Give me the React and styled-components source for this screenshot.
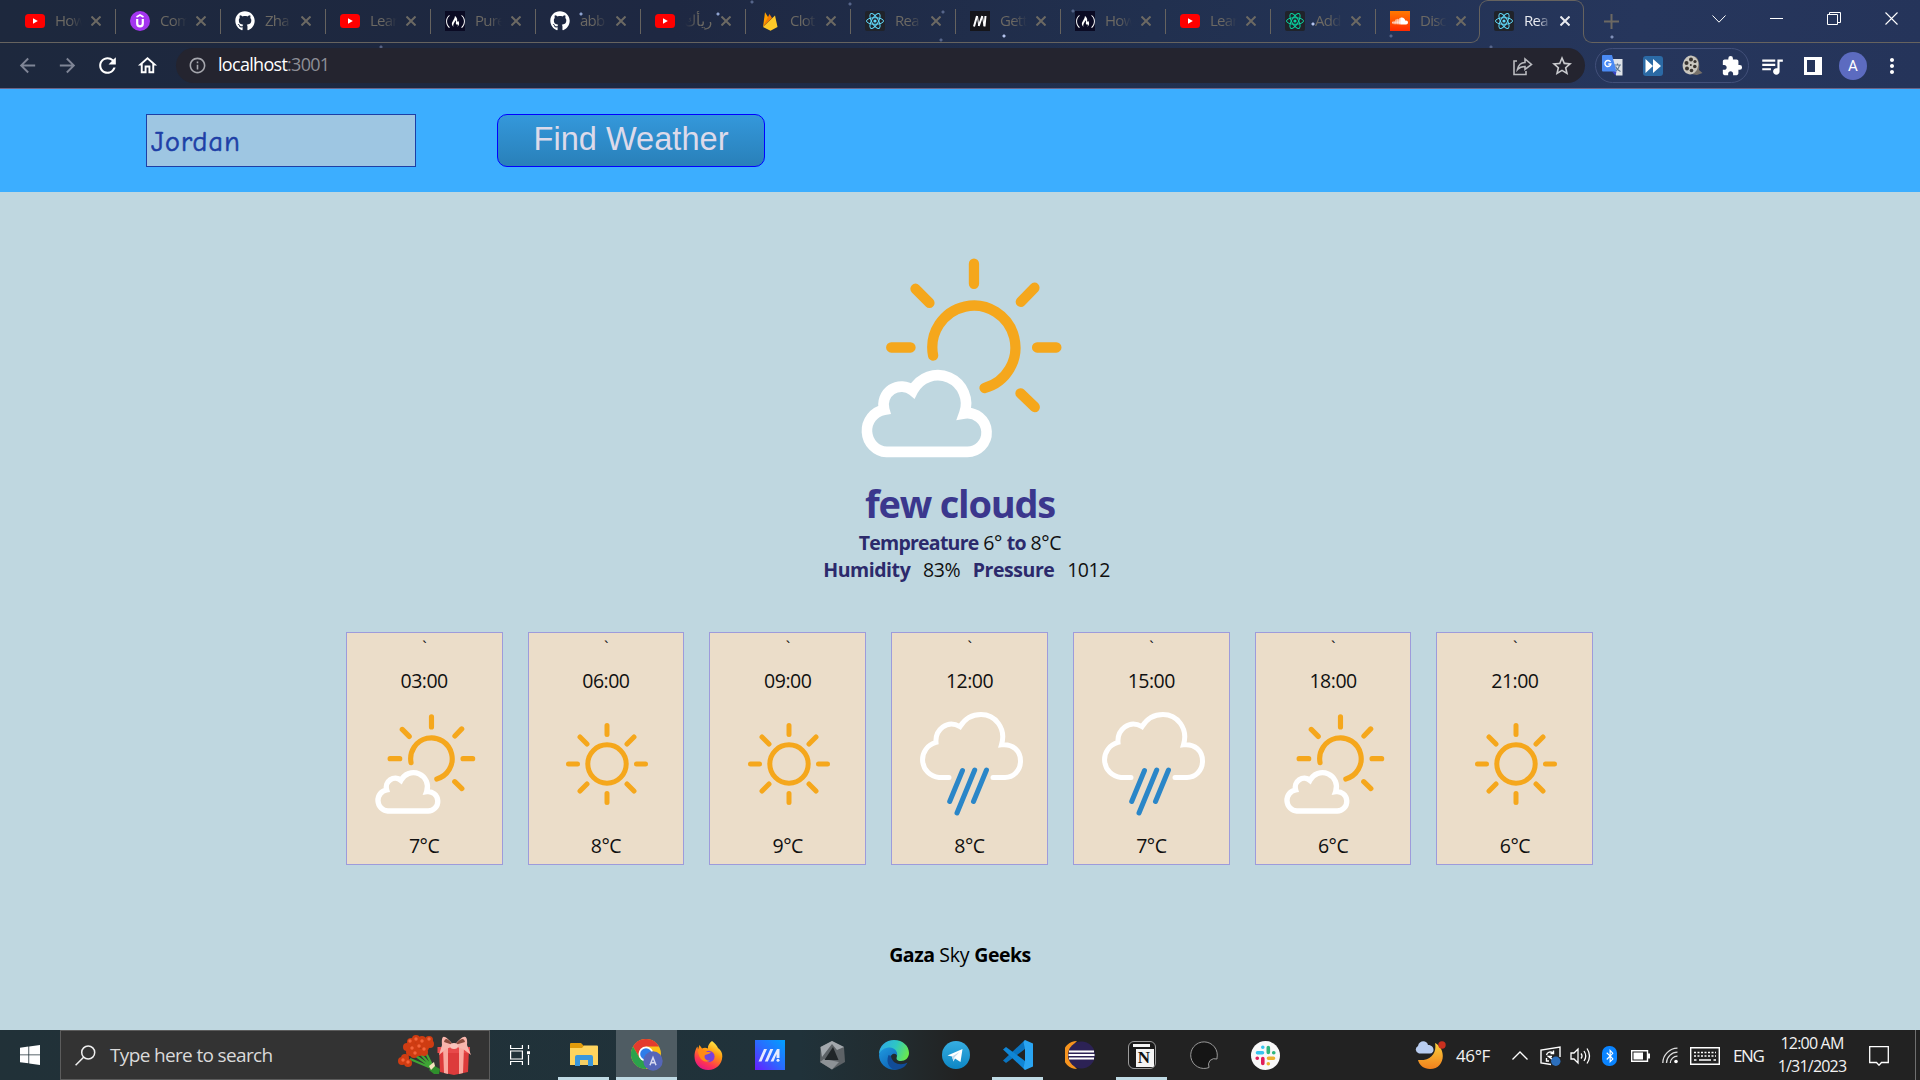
import React from "react";
import styled, { createGlobalStyle, css } from "styled-components";
import { FaYoutube, FaGithub, FaSoundcloud, FaFreeCodeCamp, FaBluetoothB } from "react-icons/fa";
import {
  MdArrowBack,
  MdArrowForward,
  MdRefresh,
  MdOutlineHome,
  MdInfoOutline,
  MdStarBorder,
  MdExtension,
  MdQueueMusic,
  MdMoreVert,
} from "react-icons/md";

const Global = createGlobalStyle`
  * { box-sizing: border-box; }
  body { margin: 0; font-family: "Open Sans", "Noto Sans", sans-serif; overflow: hidden; }
  svg { display: block; flex: none; }
`;

const Screen = styled.div`
  width: 1920px;
  height: 1080px;
  display: flex;
  flex-direction: column;
  background: #bfd7e0;
`;

/* ---------- browser window ---------- */

const star = (x, y, c = "#8fa3d0") => `radial-gradient(circle at ${x}px ${y}px, ${c} 0 1px, transparent 2px)`;

const Browser = styled.div`
  height: 89px;
  flex: none;
  border-bottom: 1px solid #6a6488;
  background: ${[
    star(581, 14),
    star(381, 47, "#566182"),
    star(752, 2, "#56658a"),
    star(850, 4, "#56658a"),
    star(718, 14),
    star(943, 12, "#56658a"),
    star(941, 40, "#56658a"),
    star(1004, 36, "#b4c4ee"),
    star(1073, 11, "#56658a"),
    star(1313, 24, "#b4c4ee"),
    star(1391, 36, "#56658a"),
    star(1491, 47, "#56658a"),
    star(1612, 37, "#8090b8"),
    "linear-gradient(97deg, #1d283d 0%, #1e2842 35%, #21304f 60%, #26365c 85%, #25345a 100%)",
  ].join(",")};
`;

const TabStrip = styled.div`
  display: flex;
  height: 43px;
`;

const line = "#66635f";

const TabGroup = styled.div`
  display: flex;
  width: 1470px;
  padding-left: 12px;
  border-bottom: 1px solid ${line};
`;

const TabBox = styled.div`
  display: flex;
  align-items: center;
  width: ${(p) => (p.$last ? 93 : 105)}px;
  height: 42px;
  padding-left: 13px;
  color: ${(p) => (p.$active ? "#e8eaf0" : "#6c6963")};
  position: relative;
`;

const ActiveBox = styled(TabBox)`
  width: 103px;
  padding-left: 14px;
  &::before {
    content: "";
    position: absolute;
    left: -1px;
    right: -1px;
    top: 0;
    height: 10px;
    border: 1px solid ${line};
    border-bottom: 0;
    border-radius: 9px 9px 0 0;
  }
`;

const Foot = styled.div`
  width: 10px;
  margin-top: 9px;
  border-bottom: 1px solid ${line};
  ${(p) =>
    p.$left
      ? css`border-right: 1px solid ${line}; border-bottom-right-radius: 9px;`
      : css`border-left: 1px solid ${line}; border-bottom-left-radius: 9px;`}
`;

const TabTitle = styled.span`
  width: 27px;
  height: 24px;
  line-height: 23px;
  margin: 0 9px 0 10px;
  font-size: 15px;
  letter-spacing: -0.75px;
  white-space: nowrap;
  direction: ${(p) => (p.$rtl ? "rtl" : "ltr")};
  mask-image: linear-gradient(to ${(p) => (p.$rtl ? "left" : "right")}, #000 50%, transparent 100%);
`;

const TabRule = styled.i`
  width: 1px;
  height: 25px;
  margin: 0 1px 0 auto;
  background: #66635f;
`;

const StripEnd = styled.div`
  flex: 1;
  display: flex;
  align-items: center;
  border-bottom: 1px solid ${line};
`;

const Slot = styled.span`
  display: flex;
  align-items: center;
  justify-content: center;
  flex: none;
  width: ${(p) => p.$w}px;
  margin-left: ${(p) => p.$ml || 0}px;
  margin-top: ${(p) => p.$mt || 0}px;
`;

const Toolbar = styled.div`
  display: flex;
  align-items: center;
  height: 45px;
  padding-left: 7px;
  color: #fff;
`;

const Omnibox = styled.div`
  display: flex;
  align-items: center;
  width: 1409px;
  height: 35px;
  border-radius: 18px;
  background: #24242f;
  color: #c8c9cd;
  padding: 0 11px 0 12px;
`;

const Url = styled.span`
  flex: 1;
  margin-left: 11px;
  font-size: 18px;
  line-height: 32px;
  height: 35px;
  letter-spacing: -0.75px;
  color: #8d8e96;
  b { font-weight: 400; color: #fff; letter-spacing: -0.7px; }
`;

const ExtPill = styled.div`
  display: flex;
  align-items: center;
  width: 154px;
  height: 35px;
  margin-left: 10px;
  border: 1px solid #42507a;
  border-radius: 18px;
`;

const Avatar = styled.span`
  width: 28px;
  height: 28px;
  border-radius: 50%;
  background: #5c6bc0;
  font: 15px/28px Roboto, sans-serif;
  text-align: center;
  color: #fff;
`;

/* ---------- weather page ---------- */

const SearchBar = styled.form`
  display: flex;
  align-items: center;
  height: 103px;
  flex: none;
  padding: 0 0 0 146px;
  background: #3caeff;
`;

const CityInput = styled.input`
  width: 270px;
  height: 53px;
  margin: 0 81px 0 0;
  padding: 3px 3px 0 4px;
  border: 1px solid #1d3fa6;
  border-radius: 0;
  background: #9ec6e2;
  color: #1d3fa6;
  font: 28px "Comic Sans MS", "Comic Neue", Lato, sans-serif;
  letter-spacing: 1.2px;
  -webkit-text-stroke: 0.6px #1d3fa6;
  outline: 0;
`;

const FindButton = styled.button`
  width: 268px;
  height: 53px;
  padding: 0 0 3px;
  border: 1px solid #0000ff;
  border-radius: 10px;
  background: linear-gradient(#3498db, #2980b9);
  color: #dcdaea;
  font: 32.6px "Liberation Sans", Arial, sans-serif;
`;

const Page = styled.main`
  flex: 1;
  display: flex;
  flex-direction: column;
  align-items: center;
  padding-top: 66px;
  color: #101010;
  font-size: 19.5px;
  line-height: 27px;
`;

const Hero = styled.div`
  padding-left: 4px;
`;

const Summary = styled.h1`
  margin: 20px 0 0;
  font-size: 38px;
  line-height: 51px;
  font-weight: 700;
  letter-spacing: -1.2px;
  color: #3b378d;
`;

const Stat = styled.p`
  margin: 0;
  white-space: pre;
  letter-spacing: ${(p) => p.$ls}px;
  word-spacing: ${(p) => p.$ws || 0}px;
  padding-left: ${(p) => p.$shift || 0}px;
  strong { color: #2c2a6c; letter-spacing: ${(p) => p.$bs}px; }
`;

const CardRow = styled.section`
  display: flex;
  gap: 25px;
  margin: 49px 0 0 19px;
`;

const Card = styled.article`
  display: flex;
  flex-direction: column;
  align-items: center;
  width: 156.8px;
  height: 233px;
  border: 1px solid #9d9bdb;
  background: #ebddc9;
  line-height: 27px;
  letter-spacing: -0.5px;
`;

const Tick = styled.span`
  height: 34px;
  padding-top: 1px;
  font-size: 16px;
`;

const CardIcon = styled.div`
  display: flex;
  align-items: center;
  justify-content: center;
  height: 104px;
  margin: 18px 0 16px 3px;
`;

const Credit = styled.footer`
  margin-top: 76px;
  color: #000;
  letter-spacing: -0.2px;
  b { letter-spacing: -0.5px; }
`;

/* ---------- taskbar ---------- */

const Taskbar = styled.div`
  display: flex;
  height: 50px;
  flex: none;
  background: linear-gradient(90deg, #213138 0, #20323a 800px, #222b2e 900px, #222222 960px);
  color: #f2f2f2;
  font-size: 18px;
`;

const StartCell = styled.div`
  display: grid;
  place-items: center;
  width: 60px;
`;

const SearchField = styled.div`
  display: flex;
  align-items: center;
  width: 430px;
  padding: 0 16px 0 14px;
  border: 1px solid #5c5c5c;
  background: #333333;
  color: #dadada;
  font-size: 19px;
  span { flex: 1; margin-left: 14px; letter-spacing: -0.65px; }
`;

const AppCell = styled.div`
  display: grid;
  place-items: center;
  width: ${(p) => (p.$active ? 61 : 51)}px;
  margin-right: ${(p) => (p.$gap ?? 11)}px;
  background: ${(p) => (p.$active ? "#4f5c63" : "transparent")};
  border-bottom: ${(p) => (p.$open ? "3px solid #bfdae4" : "0")};
  padding-top: ${(p) => (p.$open ? 3 : 0)}px;
`;

const Tray = styled.div`
  display: flex;
  align-items: center;
  margin-left: auto;
  width: 505px;
  padding-top: 1px;
`;

const TrayText = styled.span`
  width: ${(p) => p.$w}px;
  margin-left: ${(p) => p.$ml}px;
  font-size: 17px;
  letter-spacing: ${(p) => p.$ls}px;
  white-space: nowrap;
`;

const Clock = styled.div`
  width: 84px;
  margin: -3px 0 0 7px;
  font-size: 16px;
  line-height: 24px;
  letter-spacing: -0.8px;
  text-align: center;
  white-space: nowrap;
  div:first-child { padding-top: 2px; line-height: 22px; }
`;

const DesktopEdge = styled.i`
  width: 1px;
  height: 50px;
  margin: -1px 0 0 26px;
  background: #6f6f6f;
`;

/* ---------- weather drawings ---------- */

const FewClouds = ({ size }) => (
  <svg width={size} height={size * 0.99} viewBox="241 55 608 597" preserveAspectRatio="none" fill="none">
    <g stroke="#f5a71c" strokeWidth="31" strokeLinecap="round">
      <path d="M458 346A125 125 0 1 1 613 443" />
      <path d="M581 72V132M771 322H829M332 322H390M763 144L722 186M405 147L447 189M721 459L764 500" />
    </g>
    <path
      d="M318 634A63.600 63.600 0 0 1 311 508A54 54 0 0 1 397 451A84.800 84.800 0 0 1 552 519A57.900 57.900 0 1 1 558 634Z"
      stroke="#fff"
      strokeWidth="32"
    />
  </svg>
);

const Sunny = () => (
  <svg width="82" height="82" viewBox="-41 -41 82 82" fill="none" stroke="#f5a71c" strokeWidth="5" strokeLinecap="round">
    <circle r="19.2" />
    <path d="M0-38.5V-29.5M0 29.5V38.5M-38.5 0H-29.5M29.5 0H38.5M-27-27L-20-20M27-27L20-20M-27 27L-20 20M27 27L20 20" />
  </svg>
);

const Rain = () => (
  <svg width="104" height="104" viewBox="0 0 104 104" fill="none" strokeWidth="5">
    <path
      d="M30 65.400H20A17.800 17.800 0 0 1 17 30.400C16 18 28 7 41 14.600C46 6.500 53 2.500 62 2.500C76 2.500 87.500 16 82.500 32.800C94 31.500 101.500 39 101.500 49C101.500 59 94 65.400 86 65.400H74"
      stroke="#fff"
      strokeLinecap="round"
    />
    <path d="M43.500 58.500L30.700 89.500M55.700 58L38 101M67.500 58L54.500 89.500" stroke="#2a86c8" strokeLinecap="round" />
  </svg>
);

const drawings = { few: <FewClouds size={101} />, sun: <Sunny />, rain: <Rain /> };

/* ---------- favicons ---------- */

const Badge = styled.span`
  display: grid;
  place-items: center;
  flex: none;
  width: 20px;
  height: 20px;
  border-radius: ${(p) => p.$r || 0};
  background: ${(p) => p.$bg || "transparent"};
  color: ${(p) => p.$fg || "#fff"};
`;

const Play = () => (
  <Badge>
    <svg width="20" height="14" viewBox="0 0 20 14">
      <rect width="20" height="14" rx="3.500" fill="#f00" />
      <path d="M8 4.200L12.800 7 8 9.800Z" fill="#fff" />
    </svg>
  </Badge>
);
const Udemy = () => (
  <Badge $r="50%" $bg="#a435f0">
    <svg width="20" height="20" viewBox="0 0 20 20" fill="none" stroke="#fff" strokeWidth="2.200">
      <path d="M6.500 6L10 4l3.500 2" strokeWidth="1.600" />
      <path d="M7.200 8V12.500A2.800 2.800 0 0 0 12.800 12.500V8" />
    </svg>
  </Badge>
);
const Git = () => (
  <Badge>
    <FaGithub size={20} />
  </Badge>
);
const Camp = () => (
  <Badge $bg="#0a0a23">
    <FaFreeCodeCamp size={19} />
  </Badge>
);
const Firebase = () => (
  <Badge>
    <svg width="20" height="20" viewBox="0 0 20 20">
      <path d="M3 16L5 1.200 9 7.500Z" fill="#ffa000" />
      <path d="M3 16L9.500 3l2.500 4Z" fill="#f57c00" />
      <path d="M3 16L15 4.500 17.500 16 10.500 19.800Z" fill="#ffca28" />
    </svg>
  </Badge>
);
const Atom = ({ color }) => (
  <Badge $bg="#20232a" $r="2px">
    <svg width="20" height="20" viewBox="-10 -10 20 20" fill="none" stroke={color} strokeWidth="1">
      <ellipse rx="8.500" ry="3.300" />
      <ellipse rx="8.500" ry="3.300" transform="rotate(60)" />
      <ellipse rx="8.500" ry="3.300" transform="rotate(120)" />
      <circle r="1.600" fill={color} stroke="none" />
    </svg>
  </Badge>
);
const Slashes = () => (
  <Badge $bg="#15151a">
    <svg width="20" height="20" viewBox="0 0 20 20" fill="none" stroke="#fff">
      <path d="M4 15.500L7 5M8.700 15L12.300 5M14.500 15.500L15.500 5" strokeWidth="2" />
      <path d="M7.500 5L8.700 15M12.500 5L14 15" strokeWidth="1" />
    </svg>
  </Badge>
);
const Sound = () => (
  <Badge $bg="linear-gradient(#ff7a00,#ff2a00)">
    <FaSoundcloud size={16} />
  </Badge>
);

const tabs = [
  ["How", <Play />],
  ["Com", <Udemy />],
  ["Zha", <Git />],
  ["Lear", <Play />],
  ["Pure", <Camp />],
  ["abb", <Git />],
  ["ريأك", <Play />],
  ["Clot", <Firebase />],
  ["Rea", <Atom color="#61dafb" />],
  ["Gett", <Slashes />],
  ["How", <Camp />],
  ["Lear", <Play />],
  ["Add", <Atom color="#09d3a0" />],
  ["Disc", <Sound />],
];

const Cross = ({ s = 10, w = 2, c = "currentColor" }) => (
  <svg width={s} height={s} viewBox={`0 0 ${s} ${s}`} stroke={c} strokeWidth={w}>
    <path d={`M.5.5L${s - 0.5} ${s - 0.5}M${s - 0.5}.5L.5 ${s - 0.5}`} />
  </svg>
);

/* ---------- toolbar drawings ---------- */

const Share = () => (
  <svg width="21" height="20" viewBox="0 0 21 20" fill="none" stroke="#b9babf" strokeWidth="1.600">
    <path d="M5 5H2V18.500H14V15" />
    <path d="M5.500 13.500C6.500 8.500 9 6.500 13 6.500V3L19.500 8.500 13 13.500V10.500C9.500 10.500 7.500 11.300 5.500 13.500Z" />
  </svg>
);
const Translate = () => (
  <svg width="21" height="21" viewBox="0 0 21 21">
    <path d="M9 4H20.500V20.500H14Z" fill="#dfe3e8" />
    <path d="M12 10H19M15.500 8.500V10M17.500 10C17 13 15 15.500 12.500 16.500M13.500 11.500C14.500 14 16 15.500 18.500 16.500" fill="none" stroke="#5f7790" strokeWidth="1.200" />
    <path d="M10 16.500H14.500L13.500 20.500Z" fill="#3b45c8" />
    <path d="M1 0H10L14.500 16.500H1A1 1 0 0 1 0 15.500V1A1 1 0 0 1 1 0Z" fill="#4a8af4" />
    <path d="M8.500 7A3 3 0 1 0 8.900 9H6.300" fill="none" stroke="#fff" strokeWidth="1.400" />
  </svg>
);
const FastForward = () => (
  <svg width="20" height="20" viewBox="0 0 20 20">
    <rect width="20" height="20" rx="3" fill="#2b6aa5" />
    <path d="M2.500 3L10 10 2.500 17ZM10 3L18 10 10 17Z" fill="#fff" />
  </svg>
);
const Film = () => (
  <svg width="21" height="21" viewBox="0 0 21 21">
    <path d="M10 1C17 0 18 10 17 15L20.500 18 15 20 9 19Z" fill="#77716a" />
    <ellipse cx="8.500" cy="10" rx="7.800" ry="9.500" fill="#c9c6be" transform="rotate(10 8.500 10)" />
    <g fill="#38332f">
      <circle cx="9" cy="4.500" r="2" /><circle cx="4.500" cy="8" r="2" /><circle cx="5" cy="13.500" r="2" />
      <circle cx="9.500" cy="15.500" r="1.800" /><circle cx="12.800" cy="11.500" r="1.800" /><circle cx="13" cy="6.500" r="1.600" />
      <circle cx="8.800" cy="10" r="1" />
    </g>
  </svg>
);

/* ---------- taskbar drawings ---------- */

const Windows = () => (
  <svg width="20" height="20" viewBox="0 0 20 20" fill="#fff">
    <path d="M0 2.800L8.400 1.600V9.500H0ZM9.200 1.500L20 0V9.500H9.200ZM0 10.300H8.400V18.300L0 17.200ZM9.200 10.300H20V20L9.200 18.400Z" />
  </svg>
);
const Lens = () => (
  <svg width="21" height="21" viewBox="0 0 21 21" fill="none" stroke="#f0f0f0" strokeWidth="1.500">
    <circle cx="13.200" cy="7.500" r="6.500" />
    <path d="M8.600 12.200L.6 20.200" />
  </svg>
);
const Gifts = () => (
  <svg width="75" height="40" viewBox="0 0 75 40">
    <g stroke="#3fa535" strokeWidth="2.200">
      <path d="M14 18L40 37M20 16L38 36M26 14L36 34M12 24L38 35" />
    </g>
    <path d="M35 30L42 34 41 39 36 39 31 35Z" fill="#2f8f2c" />
    <path d="M31 31L36 27 37 31 33 35Z" fill="#f4e2bd" />
    <g fill="#cf3c12">
      {[[9,12],[13,7],[18,4],[24,5],[31,5],[12,17],[17,12],[22,9],[27,12],[16,19],[21,17],[26,17],[4,26],[10,28],[7,23],[28,8],[32,9]].map(([x, y]) => (
        <circle key={`${x}-${y}`} cx={x} cy={y} r="4" />
      ))}
    </g>
    <g fill="#f4643a">
      {[[12,6],[18,4],[24,6],[31,4],[14,13],[21,11],[26,14],[17,18],[5,25],[10,27]].map(([x, y]) => (
        <circle key={`${x}-${y}`} cx={x} cy={y} r="1.700" />
      ))}
    </g>
    <path d="M41 14H71L70 37 56 40 42 37Z" fill="#dd3b3b" />
    <path d="M39.500 12H72V18H39.500Z" fill="#e84a4a" />
    <path d="M45 12H50V39L46 38ZM61 12H66L65 38 61 39Z" fill="#f9a9a0" />
    <path d="M56 11C46-2 43 0 44 10L41 20 48 14ZM56 11C66-2 70 0 69 10L73 20 65 14Z" fill="#f8b5ac" />
    <path d="M55 10C50 3 47 2 46 7ZM57 10C62 3 66 2 67 7Z" fill="#8a4a3c" />
    <ellipse cx="56" cy="11" rx="4" ry="3" fill="#fbc4bc" />
  </svg>
);
const TaskView = () => (
  <svg width="20" height="20" viewBox="0 0 20 20" fill="none" stroke="#fff" strokeWidth="1.200">
    <path d="M.6 0V3.500H12.400V0M.6 6H12.400V14H.6ZM.6 20V16.500H12.400V20M18.500 0V4M18.500 10V20" />
    <path d="M17 6.200H20V9.200H17Z" fill="#fff" stroke="none" />
  </svg>
);
const Explorer = () => (
  <svg width="28" height="24" viewBox="0 0 28 24">
    <path d="M0 1A1 1 0 0 1 1 0H11L14 3V8H0Z" fill="#e19b0b" />
    <path d="M0 5H12L14 2.500H27A1 1 0 0 1 28 3.500V22H0Z" fill="#ffd45e" />
    <path d="M5 23V14A2 2 0 0 1 7 12H21A2 2 0 0 1 23 14V23H18V17H10V23Z" fill="#3b97dc" />
    <path d="M10 17H18V22H10Z" fill="#f6cf65" />
  </svg>
);
const Chrome = () => (
  <svg width="32" height="32" viewBox="-15 -15 32 32">
    <circle r="15" fill="#fbc116" />
    <path d="M-13-7.500A15 15 0 0 1 13-7.500H0L-6.500 3.700Z" fill="#e33b2e" />
    <path d="M-13-7.500A15 15 0 0 0 0 15L6.500 3.700-6.500 3.700Z" fill="#2ba24c" />
    <circle r="7.500" fill="#fff" />
    <circle r="5.800" fill="#2f7de9" />
    <circle cx="7" cy="7" r="9.700" fill="#5566b8" />
    <path d="M4 11.200L7 3.500 10 11.200M5 8.800H9" fill="none" stroke="#d7d9f0" strokeWidth="1.500" />
  </svg>
);
const Firefox = () => (
  <svg width="29" height="29" viewBox="0 0 29 29">
    <defs>
      <linearGradient id="ffx" x1=".8" y1="0" x2=".3" y2="1">
        <stop offset="0" stopColor="#fff44f" /><stop offset=".4" stopColor="#ff980e" />
        <stop offset=".75" stopColor="#ff3750" /><stop offset="1" stopColor="#e31587" />
      </linearGradient>
      <radialGradient id="ffp"><stop offset="0" stopColor="#5b4fe0" /><stop offset="1" stopColor="#8b38d8" /></radialGradient>
    </defs>
    <path d="M18 0C21 2 23 5 24 7C27 9 28.500 12 28.300 15.500C28 23.500 22 29 14.300 29C6 29 .5 23 .5 15.500C.5 11 2 7 3.500 5.500L4 8.500L5.500 4L8 7.500C10 6.500 12 6.500 14 7.500C13.500 4.500 15.500 2 18 0Z" fill="url(#ffx)" />
    <circle cx="14.800" cy="15.500" r="5.800" fill="url(#ffp)" />
    <path d="M4 9C8 7 11 9 13 11L17 11C16 13 13 13.500 11 14C9.500 17 12 20 16 19.500C12 23 4 19 4 9Z" fill="#ff8a16" />
  </svg>
);
const MyAsus = () => (
  <svg width="30" height="30" viewBox="0 0 30 30">
    <defs>
      <linearGradient id="asus" x1="0" y1="1" x2="1" y2="0">
        <stop offset="0" stopColor="#6a1cff" /><stop offset=".5" stopColor="#2a6bff" /><stop offset="1" stopColor="#00a2ff" />
      </linearGradient>
    </defs>
    <path d="M0 0H30V30H0Z" fill="url(#asus)" />
    <path d="M3.500 21.500L9 9H12L6.500 21.500ZM9.800 21.500L15.300 9H18.300L12.800 21.500ZM15.500 21.500L22 9H24.500V18H21.500V14L18.500 21.500Z" fill="#e6ebff" />
    <circle cx="23" cy="20.300" r="1.500" fill="#e6ebff" />
  </svg>
);
const Armoury = () => (
  <svg width="26" height="29" viewBox="0 0 26 29">
    <path d="M13 0L25 6 26 21 13 28.500 1 21 1.500 6Z" fill="#5d6266" />
    <path d="M13 0L25 6 18 9 13 3 3 16 1.500 6Z" fill="#a3a8ad" />
    <path d="M1 21L5 18 20 21 13 28.500Z" fill="#8d9296" />
    <path d="M14 6L19.500 19 5.500 19Z" fill="#202528" />
  </svg>
);
const Edge = () => (
  <svg width="30" height="30" viewBox="0 0 30 30">
    <defs>
      <linearGradient id="edg" x1="0" y1=".3" x2="1" y2=".6">
        <stop offset="0" stopColor="#2fa9e6" /><stop offset=".5" stopColor="#2ec6c4" /><stop offset="1" stopColor="#6be84a" />
      </linearGradient>
      <linearGradient id="edb" x1="0" y1="0" x2=".6" y2="1"><stop offset="0" stopColor="#1f9ae0" /><stop offset="1" stopColor="#0f66b8" /></linearGradient>
    </defs>
    <path d="M0 14C0 6 7 0 15 0C24 0 30 6 30 13C30 18 26 21 22 21C18 21 17 19 17.800 17C19 13 16 10 12 10C6 10 1 13 0 14Z" fill="url(#edg)" />
    <path d="M0 15C1 10 6 7.500 11 7.500C16 8 19 12 18 16C17 12 11 14 11 19C11 24 14 28 18 29.700C8 31 0 24 0 15Z" fill="url(#edb)" />
    <path d="M9.500 15C6 24 12 30 18 29.700C23 29 27 26 28.500 22.500C22 26 13 24 12 16Z" fill="#114c98" />
  </svg>
);
const Telegram = () => (
  <svg width="28" height="28" viewBox="0 0 28 28">
    <defs><linearGradient id="tlg" x2="0" y2="1"><stop stopColor="#37aee2" /><stop offset="1" stopColor="#0d86c4" /></linearGradient></defs>
    <circle cx="14" cy="14" r="14" fill="url(#tlg)" />
    <path d="M5.500 14.500L20.500 8 18.500 21 13 17.500 11.500 20.500 10 15.500Z" fill="#fff" />
    <path d="M10 15.500L17.500 11 12.300 16.500 11.500 20.500Z" fill="#c5dcee" />
  </svg>
);
const Code = () => (
  <svg width="30" height="30" viewBox="0 0 30 30">
    <path d="M22 0L0 20.500 3 23 22 9Z" fill="#0a74c0" />
    <path d="M0 9.500L3 7 22 21V30Z" fill="#0f86d6" />
    <path d="M22 0L30 3.500V26.500L22 30 20.500 28 22 21V9L20.500 2Z" fill="#2aa5f2" />
  </svg>
);
const Eclipse = () => (
  <svg width="30" height="28" viewBox="0 0 30 28">
    <path d="M12 0A14 14 0 0 0 12 28C5 22 5 6 12 0Z" fill="#f7941e" />
    <circle cx="16.500" cy="14" r="13.500" fill="#2c2255" />
    <path d="M4 10.500H29M3.500 14H29.500M4 17.500H29" stroke="#fff" strokeWidth="1.900" />
  </svg>
);
const NotionBox = styled.span`
  display: grid;
  place-items: center;
  width: 28px;
  height: 28px;
  padding: 6px 0 0 5px;
  background:
    linear-gradient(#f5f5f5, #f5f5f5) 7px 7px / 18px 18px no-repeat,
    linear-gradient(#f5f5f5, #f5f5f5) 4px 2px / 17px 3px no-repeat,
    #1b1b1b;
  border: 1px solid #9c9c9c;
  border-radius: 6px;
  color: #111;
  font: bold 17px/18px "Liberation Serif", serif;
`;
const DarkMoon = () => (
  <svg width="28" height="28" viewBox="0 0 28 28">
    <path d="M27 17A13.300 13.300 0 1 0 19 26.500A7 7 0 0 1 20 19.500A7 7 0 0 1 27 18Z" fill="#151515" stroke="#9a9a9a" strokeWidth="1" />
  </svg>
);
const Slack = () => (
  <svg width="29" height="29" viewBox="0 0 29 29" strokeWidth="3.600" strokeLinecap="round">
    <circle cx="14.500" cy="14.500" r="14.500" fill="#f8f8f8" />
    <path d="M6.500 11.800H11.500M11.800 6.200V6.300" stroke="#36c5f0" />
    <path d="M17.300 6.500V11.500M22.700 11.800H22.800" stroke="#2eb67d" />
    <path d="M17.500 17.300H22.500M17.300 22.700V22.800" stroke="#ecb22e" />
    <path d="M11.800 17.500V22.500M6.200 17.300H6.300" stroke="#e01e5a" />
  </svg>
);
const MoonCloud = () => (
  <svg width="31" height="29" viewBox="0 0 31 29">
    <defs><linearGradient id="moon" x2="0" y2="1"><stop stopColor="#fbd03c" /><stop offset="1" stopColor="#f2801c" /></linearGradient></defs>
    <path d="M20 2C32 8 30 28 15 28C9 28 4 24 3 19C16 20 22 12 20 2Z" fill="url(#moon)" />
    <path d="M4 12.500A4 4 0 0 1 3 5C4-1 12-1 13 4C20 4 20 12.500 15 12.500Z" fill="#b9cdf0" />
    <circle cx="27" cy="4" r="3.700" fill="#c9301f" />
  </svg>
);
const Sync = () => (
  <svg width="21" height="20" viewBox="0 0 21 20" fill="none" stroke="#fff" strokeWidth="1.400">
    <path d="M11 18.500L1 17V4L20 1V11" />
    <path d="M6.500 9A4 4 0 0 1 13 7M13.500 4.500V7.500H10.500M12 10.500H8.500L12.500 13.500M6.500 12V15H9" />
    <circle cx="15.800" cy="15.300" r="4.700" fill="#2c6fbd" stroke="none" />
  </svg>
);
const Volume = () => (
  <svg width="21" height="20" viewBox="0 0 21 20" fill="none" stroke="#fff" strokeWidth="1.300">
    <path d="M1 7H4L8 3V17L4 13H1ZM11 7.500Q13 10 11 12.500M14 5Q17.500 10 14 15M17 2.500Q22 10 17 17.500" />
  </svg>
);
const Battery = () => (
  <svg width="19" height="12" viewBox="0 0 19 12">
    <path d="M.7.7H16.500V11.300H.7Z" fill="none" stroke="#fff" strokeWidth="1.400" />
    <path d="M2.500 2.500H12V9.500H2.500ZM17 3.500H19V8.500H17Z" fill="#fff" />
  </svg>
);
const Wifi = () => (
  <svg width="17" height="17" viewBox="0 0 17 17" fill="none" stroke="#ddd" strokeWidth="1.300">
    <path d="M.8 16A15 15 0 0 1 15.500 1.200M4.500 16A11 11 0 0 1 15.500 5.200M8.300 16A7 7 0 0 1 15.500 9.200" />
    <circle cx="14" cy="14.500" r="1.800" fill="#fff" stroke="none" />
  </svg>
);
const Keyboard = () => (
  <svg width="30" height="18" viewBox="0 0 30 18" fill="none" stroke="#fff" strokeWidth="1.400">
    <path d="M.7.700H29.300V17.300H.7Z" />
    <path d="M4 5.500H26M4 9H26" strokeDasharray="2 1.500" />
    <path d="M4 13H6.500M9 13H21M23.500 13H26" />
  </svg>
);
const Note = () => (
  <svg width="20" height="20" viewBox="0 0 20 20" fill="none" stroke="#fff" strokeWidth="1.300">
    <path d="M.7.7H19.300V16.500H12.500L10 19.200 7.500 16.500H.7Z" />
  </svg>
);
const BtPill = styled.span`
  display: grid;
  place-items: center;
  width: 15px;
  height: 20px;
  border-radius: 7px;
  background: #0a84ff;
`;

const apps = [
  { id: "explorer", icon: <Explorer />, open: true, gap: 7 },
  { id: "chrome", icon: <Chrome />, open: true, active: true, gap: 6 },
  { id: "firefox", icon: <Firefox />, gap: 10 },
  { id: "asus", icon: <MyAsus /> },
  { id: "armoury", icon: <Armoury /> },
  { id: "edge", icon: <Edge /> },
  { id: "telegram", icon: <Telegram /> },
  { id: "code", icon: <Code />, open: true },
  { id: "eclipse", icon: <Eclipse /> },
  { id: "notion", icon: <NotionBox>N</NotionBox>, open: true },
  { id: "moon", icon: <DarkMoon /> },
  { id: "slack", icon: <Slack /> },
];

const hours = [
  ["03:00", "few", 7],
  ["06:00", "sun", 8],
  ["09:00", "sun", 9],
  ["12:00", "rain", 8],
  ["15:00", "rain", 7],
  ["18:00", "few", 6],
  ["21:00", "sun", 6],
];

export default function App() {
  return (
    <Screen>
      <Global />
      <Browser>
        <TabStrip>
          <TabGroup>
            {tabs.map(([title, icon], i) => (
              <TabBox key={i} $last={i === 13}>
                {icon}
                <TabTitle $rtl={i === 6}>{title}</TabTitle>
                <Cross />
                {i < 13 && <TabRule />}
              </TabBox>
            ))}
          </TabGroup>
          <Foot $left />
          <ActiveBox $active>
            <Atom color="#61dafb" />
            <TabTitle>Rea</TabTitle>
            <Cross />
          </ActiveBox>
          <Foot />
          <StripEnd>
            <Slot $w={16} $ml={10}>
              <svg width="15" height="15" viewBox="0 0 15 15" stroke="#6c6963" strokeWidth="2">
                <path d="M7.500 0V15M0 7.500H15" />
              </svg>
            </Slot>
            <Slot $w={14} $ml={93} $mt={-5}>
              <svg width="14" height="8" viewBox="0 0 14 8" fill="none" stroke="#fff">
                <path d="M.5.500L7 7.200 13.500.5" />
              </svg>
            </Slot>
            <Slot $w={13} $ml={44} $mt={-5}>
              <svg width="13" height="1"><rect width="13" height="1" fill="#fff" /></svg>
            </Slot>
            <Slot $w={14} $ml={44} $mt={-5}>
              <svg width="14" height="13" viewBox="0 0 14 13" fill="none" stroke="#fff">
                <path d="M.5 2.500H10.500V12.500H.5ZM2.500 2.500V.5H13.500V10.500H10.500" />
              </svg>
            </Slot>
            <Slot $w={13} $ml={44} $mt={-5}>
              <Cross s={13} w={1.1} c="#fff" />
            </Slot>
          </StripEnd>
        </TabStrip>
        <Toolbar>
          <Slot $w={40}><MdArrowBack size={23} color="#7f8596" /></Slot>
          <Slot $w={40}><MdArrowForward size={23} color="#7f8596" /></Slot>
          <Slot $w={40}><MdRefresh size={25} /></Slot>
          <Slot $w={40}><MdOutlineHome size={23} /></Slot>
          <Slot $w={9} />
          <Omnibox>
            <MdInfoOutline size={19} color="#a5a6ad" />
            <Url><b>localhost</b>:3001</Url>
            <Slot $w={21} $ml={0}><Share /></Slot>
            <Slot $w={24} $ml={17}><MdStarBorder size={24} color="#c9cace" /></Slot>
          </Omnibox>
          <ExtPill>
            <Slot $w={21} $ml={6}><Translate /></Slot>
            <Slot $w={20} $ml={20}><FastForward /></Slot>
            <Slot $w={21} $ml={19}><Film /></Slot>
            <Slot $w={22} $ml={18}><MdExtension size={22} /></Slot>
          </ExtPill>
          <Slot $w={24} $ml={11}><MdQueueMusic size={26} /></Slot>
          <Slot $w={18} $ml={20}>
            <svg width="18" height="18" viewBox="0 0 18 18">
              <path d="M0 0H18V18H0ZM3 3V15H11V3Z" fill="#fff" fillRule="evenodd" />
            </svg>
          </Slot>
          <Slot $w={28} $ml={17}><Avatar>A</Avatar></Slot>
          <Slot $w={24} $ml={13}><MdMoreVert size={24} /></Slot>
        </Toolbar>
      </Browser>

      <SearchBar onSubmit={(e) => e.preventDefault()}>
        <CityInput defaultValue="Jordan" />
        <FindButton>Find Weather</FindButton>
      </SearchBar>

      <Page>
        <Hero><FewClouds size={202} /></Hero>
        <Summary>few clouds</Summary>
        <Stat $ls={-0.35} $bs={-0.75}>
          <strong>Tempreature</strong> 6° <strong>to</strong> 8°C
        </Stat>
        <Stat $ls={-0.5} $bs={-0.45} $ws={-0.3} $shift={13}>
          <strong>Humidity</strong>{"   "}83%{"   "}<strong>Pressure</strong>{"   "}1012
        </Stat>
        <CardRow>
          {hours.map(([time, kind, deg]) => (
            <Card key={time}>
              <Tick>`</Tick>
              <span>{time}</span>
              <CardIcon>{drawings[kind]}</CardIcon>
              <span>{deg}°C</span>
            </Card>
          ))}
        </CardRow>
        <Credit>
          <b>Gaza</b> Sky <b>Geeks</b>
        </Credit>
      </Page>

      <Taskbar>
        <StartCell><Windows /></StartCell>
        <SearchField>
          <Lens />
          <span>Type here to search</span>
          <Gifts />
        </SearchField>
        <Slot $w={20} $ml={20}><TaskView /></Slot>
        <Slot $w={28} />
        {apps.map((a) => (
          <AppCell key={a.id} $open={a.open} $active={a.active} $gap={a.gap}>{a.icon}</AppCell>
        ))}
        <Tray>
          <MoonCloud />
          <TrayText $w={38} $ml={10} $ls={-0.4}>46°F</TrayText>
          <Slot $w={16} $ml={18}>
            <svg width="16" height="9" viewBox="0 0 16 9" fill="none" stroke="#fff" strokeWidth="1.300">
              <path d="M.5 8.500L8 1 15.500 8.500" />
            </svg>
          </Slot>
          <Slot $w={21} $ml={12}><Sync /></Slot>
          <Slot $w={21} $ml={9}><Volume /></Slot>
          <Slot $w={15} $ml={11}><BtPill><FaBluetoothB size={14} color="#fff" /></BtPill></Slot>
          <Slot $w={19} $ml={14}><Battery /></Slot>
          <Slot $w={17} $ml={12}><Wifi /></Slot>
          <Slot $w={30} $ml={11}><Keyboard /></Slot>
          <TrayText $w={30} $ml={13} $ls={-1.4}>ENG</TrayText>
          <Clock>
            <div>12:00 AM</div>
            <div>1/31/2023</div>
          </Clock>
          <Slot $w={20} $ml={15}><Note /></Slot>
          <DesktopEdge />
        </Tray>
      </Taskbar>
    </Screen>
  );
}
